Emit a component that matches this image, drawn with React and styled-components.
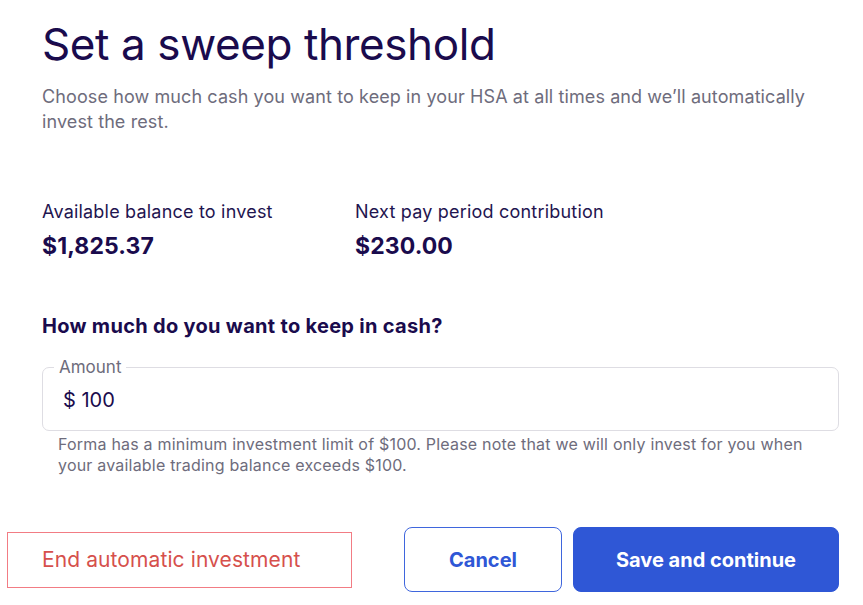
import React from "react";
import styled, { createGlobalStyle } from "styled-components";

const Global = createGlobalStyle`
  html, body { margin: 0; padding: 0; background: #ffffff; }
  body { font-family: Inter, "Noto Sans", sans-serif; -webkit-font-smoothing: antialiased; }
  * { box-sizing: border-box; }
`;

const Page = styled.div`
  width: 863px;
  height: 605px;
  padding: 14px 24px 0 42px;
  display: flex;
  flex-direction: column;
`;

const Title = styled.h1`
  margin: 0;
  font-size: 44px;
  font-weight: 400;
  line-height: 60px;
  color: #1a0b4d;
  letter-spacing: -0.4px;
`;

const Subtitle = styled.p`
  margin: 10px 0 0;
  width: 790px;
  font-size: 18px;
  line-height: 25px;
  color: #6e6c7c;
  letter-spacing: 0.1px;
`;

const Stats = styled.div`
  display: flex;
  margin-top: 67px;
`;

const Stat = styled.div`
  width: ${(p) => p.$w}px;
  display: flex;
  flex-direction: column;
  gap: 9px;
`;

const StatLabel = styled.div`
  font-size: 18px;
  line-height: 22px;
  color: #1f1550;
  letter-spacing: 0.2px;
`;

const StatValue = styled.div`
  font-size: 23px;
  font-weight: 700;
  line-height: 28px;
  color: #1a0b4d;
  letter-spacing: 0.1px;
`;

const Question = styled.h2`
  margin: 54px 0 0;
  font-size: 20px;
  font-weight: 700;
  line-height: 24px;
  color: #1a0b4d;
  letter-spacing: 0.3px;
`;

const Field = styled.div`
  position: relative;
  margin-top: 29px;
  width: 797px;
  height: 64px;
  border: 1.5px solid #dedde3;
  border-radius: 7px;
  padding: 0 20px;
  display: flex;
  align-items: center;
`;

const Legend = styled.span`
  position: absolute;
  top: -11px;
  left: 11px;
  padding: 0 5px;
  background: #ffffff;
  font-size: 17px;
  line-height: 20px;
  color: #6e6c7c;
`;

const Value = styled.div`
  margin-top: 2px;
  font-size: 20px;
  color: #1a0b4d;
`;

const Helper = styled.p`
  margin: 3px 0 0 16px;
  width: 770px;
  font-size: 16px;
  line-height: 21px;
  color: #6e6c7c;
  letter-spacing: 0.2px;
`;

const Actions = styled.div`
  margin: 51px 0 0 -35px;
  display: flex;
  align-items: center;
  width: 832px;
`;

const EndButton = styled.button`
  width: 345px;
  height: 56px;
  padding: 0 0 0 34px;
  text-align: left;
  background: #ffffff;
  border: 1.5px solid #f27c84;
  border-radius: 0;
  font-family: inherit;
  font-size: 21px;
  color: #d6504c;
  letter-spacing: 0.1px;
  cursor: pointer;
`;

const Btn = styled.button`
  height: 65px;
  border-radius: 8px;
  font-family: inherit;
  font-size: 20px;
  font-weight: 700;
  cursor: pointer;
  width: ${(p) => p.$w}px;
  margin-left: ${(p) => p.$ml}px;
  background: ${(p) => (p.$primary ? "#2f57d6" : "#ffffff")};
  color: ${(p) => (p.$primary ? "#ffffff" : "#2f57d6")};
  border: 1.5px solid ${(p) => (p.$primary ? "#2f57d6" : "#3f66dd")};
`;

export default function App() {
  return (
    <>
      <Global />
      <Page>
        <Title>Set a sweep threshold</Title>
        <Subtitle>
          Choose how much cash you want to keep in your HSA at all times and we’ll automatically
          invest the rest.
        </Subtitle>
        <Stats>
          <Stat $w={313}>
            <StatLabel>Available balance to invest</StatLabel>
            <StatValue>$1,825.37</StatValue>
          </Stat>
          <Stat $w={300}>
            <StatLabel>Next pay period contribution</StatLabel>
            <StatValue>$230.00</StatValue>
          </Stat>
        </Stats>
        <Question>How much do you want to keep in cash?</Question>
        <Field>
          <Legend>Amount</Legend>
          <Value>$ 100</Value>
        </Field>
        <Helper>
          Forma has a minimum investment limit of $100. Please note that we will only invest for you
          when your available trading balance exceeds $100.
        </Helper>
        <Actions>
          <EndButton>End automatic investment</EndButton>
          <Btn $w={158} $ml={52}>Cancel</Btn>
          <Btn $primary $w={266} $ml={11}>Save and continue</Btn>
        </Actions>
      </Page>
    </>
  );
}
